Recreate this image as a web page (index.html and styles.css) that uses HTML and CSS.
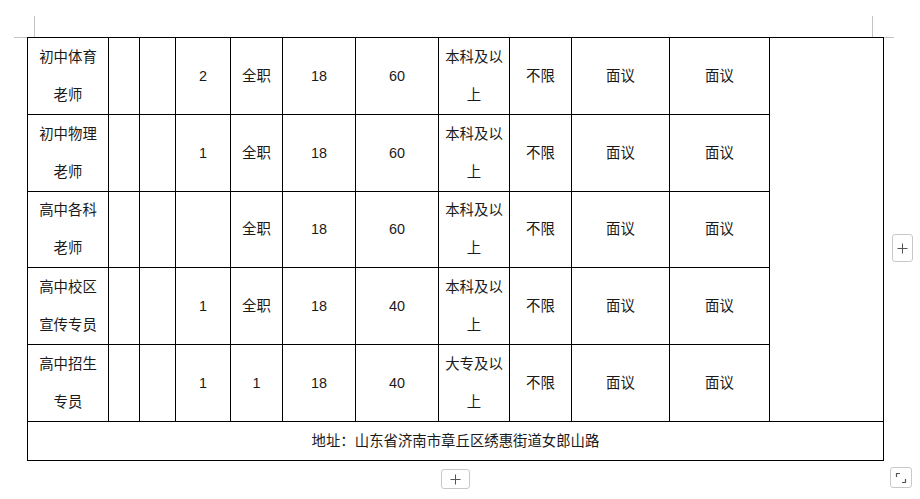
FILE: index.html
```html
<!DOCTYPE html>
<html lang="zh">
<head>
<meta charset="utf-8">
<title>招聘表</title>
<link rel="stylesheet" href="styles.css">
</head>
<body>
<div class="page">
  <div class="doc">
    <span class="mark mark-tl-v"></span>
    <span class="mark mark-tl-h"></span>
    <span class="mark mark-tr-v"></span>
    <span class="mark mark-tr-h"></span>
    <table class="grid">
      <colgroup>
        <col class="c1"><col class="c2"><col class="c3"><col class="c4"><col class="c5"><col class="c6">
        <col class="c7"><col class="c8"><col class="c9"><col class="c10"><col class="c11"><col class="c12">
      </colgroup>
      <tbody>
        <tr>
          <td>初中体育<br>老师</td><td></td><td></td><td>2</td><td>全职</td><td>18</td><td>60</td>
          <td>本科及以<br>上</td><td>不限</td><td>面议</td><td>面议</td><td rowspan="5"></td>
        </tr>
        <tr>
          <td>初中物理<br>老师</td><td></td><td></td><td>1</td><td>全职</td><td>18</td><td>60</td>
          <td>本科及以<br>上</td><td>不限</td><td>面议</td><td>面议</td>
        </tr>
        <tr class="short-row">
          <td>高中各科<br>老师</td><td></td><td></td><td></td><td>全职</td><td>18</td><td>60</td>
          <td>本科及以<br>上</td><td>不限</td><td>面议</td><td>面议</td>
        </tr>
        <tr>
          <td>高中校区<br>宣传专员</td><td></td><td></td><td>1</td><td>全职</td><td>18</td><td>40</td>
          <td>本科及以<br>上</td><td>不限</td><td>面议</td><td>面议</td>
        </tr>
        <tr>
          <td>高中招生<br>专员</td><td></td><td></td><td>1</td><td>1</td><td>18</td><td>40</td>
          <td>大专及以<br>上</td><td>不限</td><td>面议</td><td>面议</td>
        </tr>
        <tr class="addr-row">
          <td colspan="12">地址：山东省济南市章丘区绣惠街道女郎山路</td>
        </tr>
      </tbody>
    </table>
    <button class="tool tool-add-col" type="button" aria-label="添加列">
      <svg width="11" height="11" viewBox="0 0 11 11"><path d="M5.5 0.5V10.5M0.5 5.5H10.5" stroke="#555" stroke-width="1" fill="none"/></svg>
    </button>
    <button class="tool tool-add-row" type="button" aria-label="添加行">
      <svg width="11" height="11" viewBox="0 0 11 11"><path d="M5.5 0.5V10.5M0.5 5.5H10.5" stroke="#555" stroke-width="1" fill="none"/></svg>
    </button>
    <button class="tool tool-resize" type="button" aria-label="调整大小">
      <svg width="12" height="12" viewBox="0 0 12 12"><path d="M1.5 5V1.5H5M10.5 7V10.5H7" stroke="#555" stroke-width="1.2" fill="none"/></svg>
    </button>
  </div>
</div>
</body>
</html>
```
FILE: styles.css
```css
html, body {
  margin: 0;
  padding: 0;
  background: #fff;
}

body {
  width: 920px;
  height: 499px;
  overflow: hidden;
  font-family: "Liberation Sans", "Noto Sans CJK SC", sans-serif;
  color: #1a1a1a;
}

.page {
  padding: 37px 0 0 27px;
}

.doc {
  position: relative;
  width: 857px;
}

.grid {
  border-collapse: collapse;
  table-layout: fixed;
  width: 857px;
  border: 1px solid #000;
}

.c1 { width: 81px; }
.c2 { width: 31px; }
.c3 { width: 36px; }
.c4 { width: 55px; }
.c5 { width: 52px; }
.c6 { width: 73px; }
.c7 { width: 83px; }
.c8 { width: 71px; }
.c9 { width: 62px; }
.c10 { width: 98px; }
.c11 { width: 100px; }
.c12 { width: 114px; }

.grid td {
  border: 1px solid #000;
  padding: 0;
  height: 76px;
  text-align: center;
  vertical-align: middle;
  font-size: 14.4px;
  line-height: 38px;
  white-space: nowrap;
}

.grid .short-row td {
  height: 75px;
  line-height: 37.5px;
}

.grid .addr-row td {
  height: 38px;
}

.mark {
  position: absolute;
  background: #c4c4c4;
}

.mark-tl-v { left: 7px; top: -21px; width: 1px; height: 21px; }
.mark-tl-h { left: -13px; top: 0; width: 13px; height: 1px; }
.mark-tr-v { left: 845px; top: -21px; width: 1px; height: 21px; }
.mark-tr-h { left: 857px; top: 0; width: 10px; height: 1px; }

.tool {
  position: absolute;
  display: flex;
  align-items: center;
  justify-content: center;
  padding: 0;
  margin: 0;
  background: #fff;
  border: 1px solid #c8c8c8;
  border-radius: 3px;
  box-sizing: border-box;
}

.tool-add-col { left: 865px; top: 197px; width: 21px; height: 28px; }
.tool-add-row { left: 414px; top: 432px; width: 29px; height: 20px; }
.tool-resize { left: 863px; top: 430px; width: 22px; height: 21px; }
```
